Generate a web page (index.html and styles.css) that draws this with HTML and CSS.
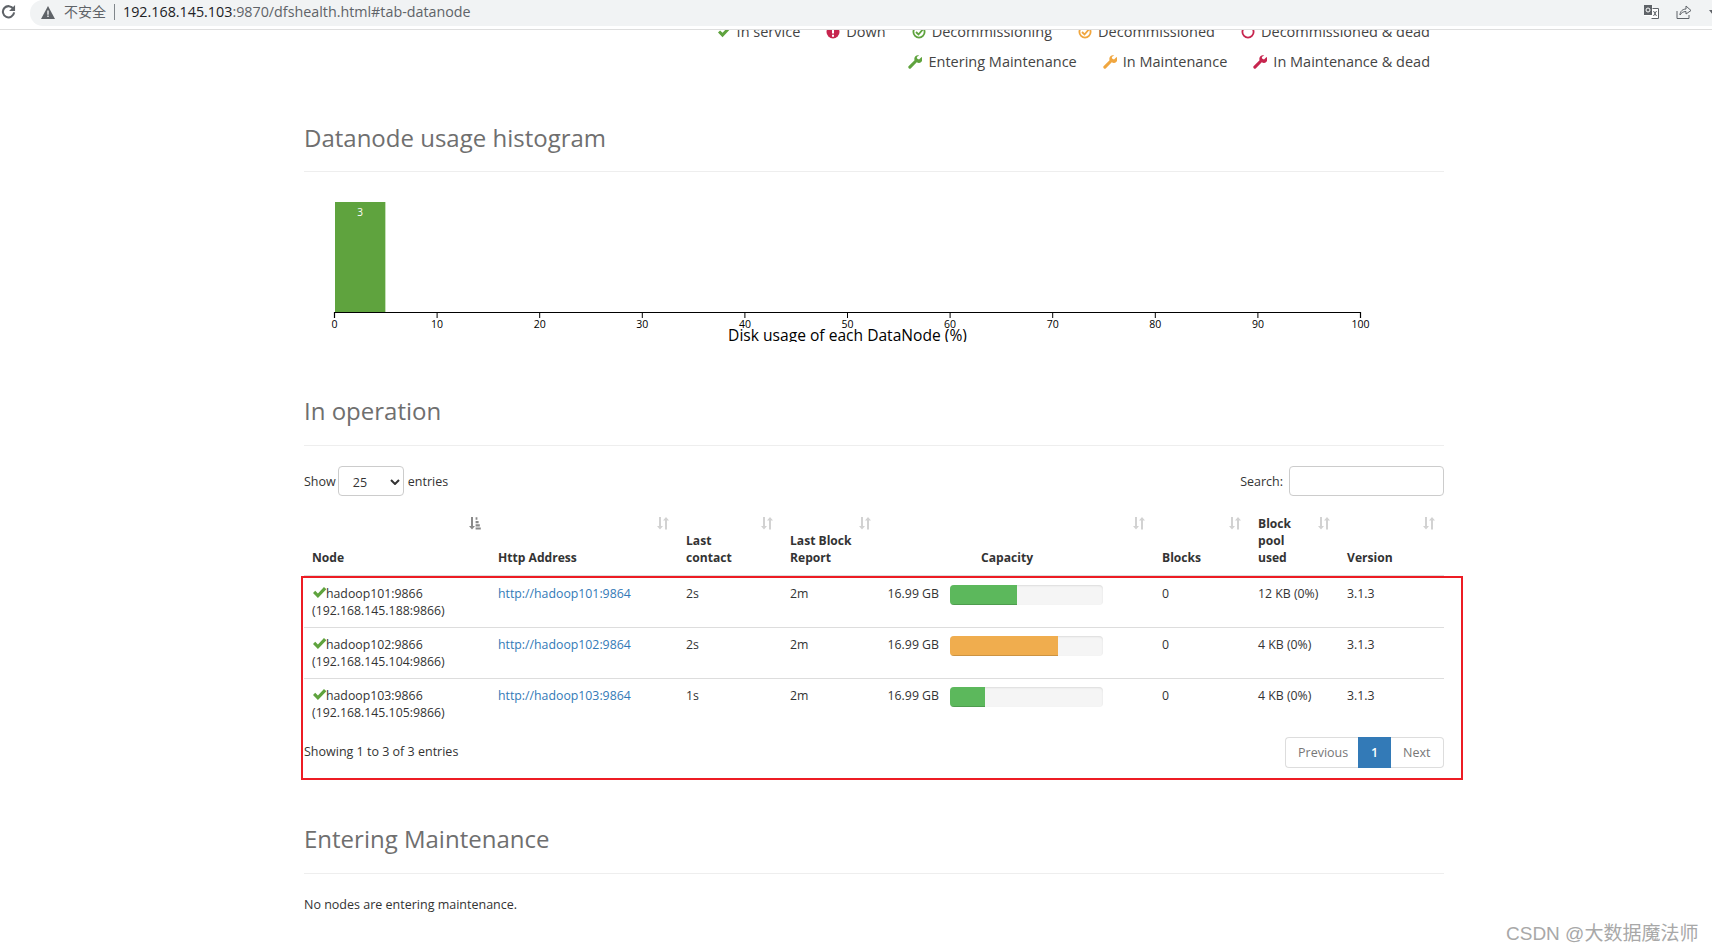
FILE: index.html
```html
<!DOCTYPE html>
<html lang="en">
<head>
<meta charset="utf-8">
<title>Namenode information</title>
<link rel="stylesheet" href="styles.css">
</head>
<body>
<svg class="defs" width="0" height="0" aria-hidden="true">
  <symbol id="wrench" viewBox="0 0 16 16"><path d="M15.5 2.2 12.6 5l-2-.6-.6-2L12.8.5A4.2 4.2 0 0 0 7.5 5.9L.9 12.5a1.7 1.7 0 0 0 2.5 2.6L10 8.4a4.2 4.2 0 0 0 5.5-6.2z"/></symbol>
  <symbol id="check" viewBox="0 0 16 14"><path d="M1 7.6 3.4 5.2 6.3 8 12.8 1 15.4 3.4 6.3 13z"/></symbol>
  <symbol id="sort" viewBox="0 0 12 14"><path d="M2 1h2v9h2L3 13.5 0 10h2zM8 13.5h2v-9h2L9 1 6 4.5h2z"/></symbol>
  <symbol id="sorted" viewBox="0 0 12 14"><path d="M2 1h2v9h2L3 13.5 0 10h2zM6.6 1.2h1.8v2.6H6.6zM6.6 5h3v2.2h-3zM6.6 8.2h4.2v2.2H6.6zM6.6 11.4h5.2v2.2H6.6z"/></symbol>
</svg>

<header class="browser">
  <svg class="reload" viewBox="0 0 16 16" width="16" height="16"><path d="M13.2 5.2A6 6 0 1 0 14 9" fill="none" stroke="#5f6368" stroke-width="2.2"/><path d="M15 1v6.4H8.6z" fill="#5f6368"/></svg>
  <div class="omnibox">
    <svg class="warn" viewBox="0 0 14 13" width="14" height="13"><path d="M7 0 14 13H0z" fill="#5f6368"/><path d="M6.3 4.5h1.4v4.2H6.3zM6.3 9.6h1.4v1.4H6.3z" fill="#f1f3f4"/></svg>
    <span class="insecure">不安全</span>
    <span class="sep"></span>
    <span class="url"><b>192.168.145.103</b>:9870/dfshealth.html#tab-datanode</span>
    <div class="tools">
      <svg viewBox="0 0 15 14" width="15" height="14"><path d="M0 0h8l1 3h6v11H7l-1-3H0z" fill="#fff"/><path d="M0 0h8v10H0z" fill="#5f6368"/><path d="M8.5 3.5h6v10h-7" fill="none" stroke="#5f6368"/><path d="M9.5 6l3 5M12.5 6l-3 5" stroke="#5f6368"/><circle cx="4" cy="5" r="2" fill="none" stroke="#fff"/></svg>
      <svg viewBox="0 0 16 14" width="16" height="14"><path d="M1 6v7.5h12V10" fill="none" stroke="#5f6368"/><path d="M4 10c0-4 3-6 6-6V1l5 4.5L10 9V6.5C7 6.5 5 8 4 10z" fill="none" stroke="#5f6368"/></svg>
      <svg class="caret" viewBox="0 0 8 5" width="8" height="5"><path d="M0 0h8L4 5z" fill="#5f6368"/></svg>
    </div>
  </div>
</header>

<div class="viewport">
<main class="page">
  <div class="legend">
    <div class="legend-row">
      <span class="item"><svg class="ico green" width="14" height="12"><use href="#check"/></svg>In service</span>
      <span class="item"><svg class="ico red" viewBox="0 0 14 14" width="14" height="14"><circle cx="7" cy="7" r="6.5"/><path d="M6 2.5h2v6H6zM6 9.8h2v2H6z" fill="#fff"/></svg>Down</span>
      <span class="item"><svg class="ico line-green" viewBox="0 0 14 14" width="14" height="14"><circle cx="7" cy="7" r="5.6"/><path d="M4 7l2.5 2.5L12 3"/></svg>Decommissioning</span>
      <span class="item"><svg class="ico line-orange" viewBox="0 0 14 14" width="14" height="14"><circle cx="7" cy="7" r="5.6"/><path d="M4 7l2.5 2.5L12 3"/></svg>Decommissioned</span>
      <span class="item"><svg class="ico line-red" viewBox="0 0 14 14" width="14" height="14"><circle cx="7" cy="7" r="5.6"/></svg>Decommissioned &amp; dead</span>
    </div>
    <div class="legend-row">
      <span class="item"><svg class="ico green" width="14" height="14"><use href="#wrench"/></svg>Entering Maintenance</span>
      <span class="item"><svg class="ico orange" width="14" height="14"><use href="#wrench"/></svg>In Maintenance</span>
      <span class="item"><svg class="ico red" width="14" height="14"><use href="#wrench"/></svg>In Maintenance &amp; dead</span>
    </div>
  </div>

  <section class="histogram">
    <h3 class="title">Datanode usage histogram</h3>
    <svg class="chart" viewBox="0 0 1140 170" width="1140" height="170">
      <rect class="bar-edge" x="31" y="30" width="51" height="110"/>
      <rect class="bar" x="31" y="30" width="50" height="110"/>
      <text class="bar-label" x="56" y="44">3</text>
      <path class="axis" d="M30.5 146V140.5H1056.5V146"/>
      <g class="tick-marks">
        <path d="M133.1 140v6M235.7 140v6M338.3 140v6M440.9 140v6M543.5 140v6M646.1 140v6M748.7 140v6M851.3 140v6M953.9 140v6"/>
      </g>
      <g class="ticks">
        <text x="30.5" y="156">0</text><text x="133.1" y="156">10</text><text x="235.7" y="156">20</text><text x="338.3" y="156">30</text><text x="440.9" y="156">40</text><text x="543.5" y="156">50</text><text x="646.1" y="156">60</text><text x="748.7" y="156">70</text><text x="851.3" y="156">80</text><text x="953.9" y="156">90</text><text x="1056.5" y="156">100</text>
      </g>
      <text class="axis-label" x="543.5" y="169">Disk usage of each DataNode (%)</text>
    </svg>
  </section>

  <section class="operation">
    <h3 class="title">In operation</h3>
    <div class="controls">
      <label class="ctl">Show <span class="select">25<svg viewBox="0 0 10 6" width="10" height="6"><path d="M1 1l4 4 4-4" fill="none" stroke="#333" stroke-width="2"/></svg></span> entries</label>
      <label class="ctl">Search: <span class="search"></span></label>
    </div>
    <table class="nodes">
      <colgroup>
        <col class="c-node"><col class="c-http"><col class="c-contact"><col class="c-report"><col class="c-cap"><col class="c-bar"><col class="c-blocks"><col class="c-pool"><col class="c-ver">
      </colgroup>
      <thead>
        <tr>
          <th>Node<svg class="sort active" width="12" height="14"><use href="#sorted"/></svg></th>
          <th>Http Address<svg class="sort" width="12" height="14"><use href="#sort"/></svg></th>
          <th>Last<br>contact<svg class="sort" width="12" height="14"><use href="#sort"/></svg></th>
          <th>Last Block<br>Report<svg class="sort" width="12" height="14"><use href="#sort"/></svg></th>
          <th colspan="2" class="capacity">Capacity<svg class="sort" width="12" height="14"><use href="#sort"/></svg></th>
          <th>Blocks<svg class="sort" width="12" height="14"><use href="#sort"/></svg></th>
          <th>Block<br>pool<br>used<svg class="sort" width="12" height="14"><use href="#sort"/></svg></th>
          <th>Version<svg class="sort" width="12" height="14"><use href="#sort"/></svg></th>
        </tr>
      </thead>
      <tbody>
        <tr>
          <td><svg class="ok" width="15" height="13"><use href="#check"/></svg>hadoop101:9866<br>(192.168.145.188:9866)</td>
          <td><a href="#">http://hadoop101:9864</a></td>
          <td>2s</td><td>2m</td>
          <td class="cap">16.99 GB</td>
          <td class="meter"><div class="progress"><div class="fill ok-fill" style="width:44%"></div></div></td>
          <td>0</td><td>12 KB (0%)</td><td>3.1.3</td>
        </tr>
        <tr>
          <td><svg class="ok" width="15" height="13"><use href="#check"/></svg>hadoop102:9866<br>(192.168.145.104:9866)</td>
          <td><a href="#">http://hadoop102:9864</a></td>
          <td>2s</td><td>2m</td>
          <td class="cap">16.99 GB</td>
          <td class="meter"><div class="progress"><div class="fill warn-fill" style="width:70.5%"></div></div></td>
          <td>0</td><td>4 KB (0%)</td><td>3.1.3</td>
        </tr>
        <tr>
          <td><svg class="ok" width="15" height="13"><use href="#check"/></svg>hadoop103:9866<br>(192.168.145.105:9866)</td>
          <td><a href="#">http://hadoop103:9864</a></td>
          <td>1s</td><td>2m</td>
          <td class="cap">16.99 GB</td>
          <td class="meter"><div class="progress"><div class="fill ok-fill" style="width:23%"></div></div></td>
          <td>0</td><td>4 KB (0%)</td><td>3.1.3</td>
        </tr>
      </tbody>
    </table>
    <div class="table-foot">
      <span class="info">Showing 1 to 3 of 3 entries</span>
      <nav class="pager"><a class="pg prev">Previous</a><a class="pg current">1</a><a class="pg next">Next</a></nav>
    </div>
    <div class="highlight"></div>
  </section>

  <section class="entering">
    <h3 class="title">Entering Maintenance</h3>
    <p class="empty">No nodes are entering maintenance.</p>
  </section>
</main>
</div>
<div class="watermark">CSDN @大数据魔法师</div>
</body>
</html>
```
FILE: styles.css
```css
* { box-sizing: border-box; }
html, body { margin: 0; height: 952px; overflow: hidden; background: #fff; }
body { font-family: "Open Sans", "Noto Sans CJK SC", sans-serif; font-size: 12.5px; line-height: 17px; color: #333; position: relative; }
.defs { position: absolute; }

.browser { height: 30px; display: flex; align-items: flex-start; background: #fff; border-bottom: 1px solid #dedede; padding-left: 1px; position: relative; z-index: 2; }
.reload { margin-top: 4px; flex: none; width: 15px; height: 15px; }
.omnibox { flex: 1; height: 26px; margin-left: 14px; background: #f1f3f4; border-radius: 13px 0 0 13px; display: flex; align-items: center; padding-left: 11px; font-size: 14px; color: #5f6368; }
.warn { flex: none; margin-top: -2px; }
.insecure { margin: -4px 0 0 9px; font-family: "Noto Sans CJK SC", sans-serif; font-size: 14px; }
.sep { width: 1px; height: 16px; background: #80868b; margin: -2px 8px 0 8px; }
.url { font-family: "Open Sans", sans-serif; font-size: 14.3px; margin-top: -4px; }
.url b { font-weight: 400; color: #202124; }
.tools { margin-left: auto; display: flex; align-items: center; gap: 17px; margin-right: -5px; margin-top: -2px; }
.caret { margin-left: 0; }

.viewport { height: 922px; overflow: hidden; }
.page { margin-top: -13px; padding: 0 268px 0 304px; }

.legend { padding-right: 14px; font-size: 14.5px; line-height: 30px; color: #444; }
.legend-row { display: flex; justify-content: flex-end; gap: 26px; height: 30px; align-items: center; }
.item { display: inline-flex; align-items: center; gap: 6px; white-space: nowrap; }
.ico { flex: none; }
.green { fill: #5fa33e; }
.orange { fill: #f0a63f; }
.red { fill: #c7254e; }
.line-green { fill: none; stroke: #5fa33e; stroke-width: 1.8; }
.line-orange { fill: none; stroke: #f0a63f; stroke-width: 1.8; }
.line-red { fill: none; stroke: #c7254e; stroke-width: 1.8; }

.title { margin: 0; font-size: 24px; line-height: 32px; font-weight: 400; color: #6f6f6f; padding-bottom: 17px; border-bottom: 1px solid #eee; }
.operation .title, .entering .title { padding-bottom: 18px; }
.histogram { margin-top: 45px; }
.chart { display: block; }
.bar { fill: #5fa33e; }
.bar-edge { fill: #c5dfb8; }
.bar-label { fill: #fff; font-size: 10px; text-anchor: middle; }
.axis { fill: none; stroke: #000; stroke-width: 1.2; }
.tick-marks path { fill: none; stroke: #000; stroke-width: 1; }
.ticks text { font-size: 10.5px; text-anchor: middle; fill: #000; }
.axis-label { font-size: 15.6px; text-anchor: middle; fill: #000; }

.operation { margin-top: 53px; position: relative; }
.controls { display: flex; justify-content: space-between; align-items: center; margin-top: 20px; height: 30px; margin-bottom: 11px; font-size: 12.5px; }
.ctl { display: flex; align-items: center; gap: 3px; }
.select { width: 66px; height: 30px; margin: 0 1px 0 -1px; border: 1px solid #ccc; border-radius: 4px; display: flex; align-items: center; justify-content: space-between; padding: 2px 3px 0 14px; }
.search { width: 155px; height: 30px; border: 1px solid #ccc; border-radius: 4px; margin-left: 3px; }

.nodes { width: 1140px; table-layout: fixed; border-collapse: separate; border-spacing: 0; font-size: 12.3px; }
.c-node { width: 186px; } .c-http { width: 188px; } .c-contact { width: 104px; } .c-report { width: 98px; }
.c-cap { width: 67px; } .c-bar { width: 207px; } .c-blocks { width: 96px; } .c-pool { width: 89px; } .c-ver { width: 105px; }
th { position: relative; text-align: left; vertical-align: bottom; padding: 8px 8px 9px; height: 70px; font-weight: 700; font-size: 12.1px; border-bottom: 2px solid #ddd; }
th.capacity { text-align: center; padding-right: 28px; }
.sort { position: absolute; right: 9px; top: 9px; fill: #d2d2d2; }
.sort.active { fill: #8a8a8a; }
td { padding: 8px; vertical-align: top; border-top: 1px solid #ddd; }
tbody tr:first-child td { border-top: 0; }
td.cap { text-align: right; white-space: nowrap; padding-left: 0; }
td.meter { padding-left: 3px; }
a { color: #337ab7; text-decoration: none; }
.ok { fill: #5fa33e; vertical-align: -1px; margin-right: -1px; }
.progress { width: 153px; height: 20px; border-radius: 4px; background: #f5f5f5; box-shadow: inset 0 1px 2px rgba(0,0,0,.1); overflow: hidden; }
.fill { height: 100%; box-shadow: inset 0 -1px 0 rgba(0,0,0,.15); }
.ok-fill { background: #5cb85c; }
.warn-fill { background: #f0ad4e; }

.table-foot { display: flex; justify-content: space-between; align-items: center; margin-top: 8px; }
.info { margin-top: -2px; }
.pager { display: flex; height: 31px; font-size: 12.5px; }
.pg { border: 1px solid #ddd; padding: 0 12px; line-height: 29px; color: #777; background: #fff; }
.prev { border-radius: 4px 0 0 4px; border-right: 0; width: 73px; }
.current { background: #337ab7; border-color: #337ab7; color: #fff; width: 33px; padding: 0; text-align: center; font-weight: 600; }
.next { border-radius: 0 4px 4px 0; border-left: 0; width: 53px; }
.highlight { position: absolute; left: -3px; right: -19px; top: 181px; height: 204px; border: 2px solid #ed1c24; pointer-events: none; }

.entering { margin-top: 55px; }
.empty { margin: 22px 0 0; }
.watermark { position: absolute; left: 1506px; top: 922px; font-family: "Liberation Sans", "Noto Sans CJK SC", sans-serif; font-size: 19px; line-height: 24px; color: #a8a8a8; white-space: nowrap; }
```
